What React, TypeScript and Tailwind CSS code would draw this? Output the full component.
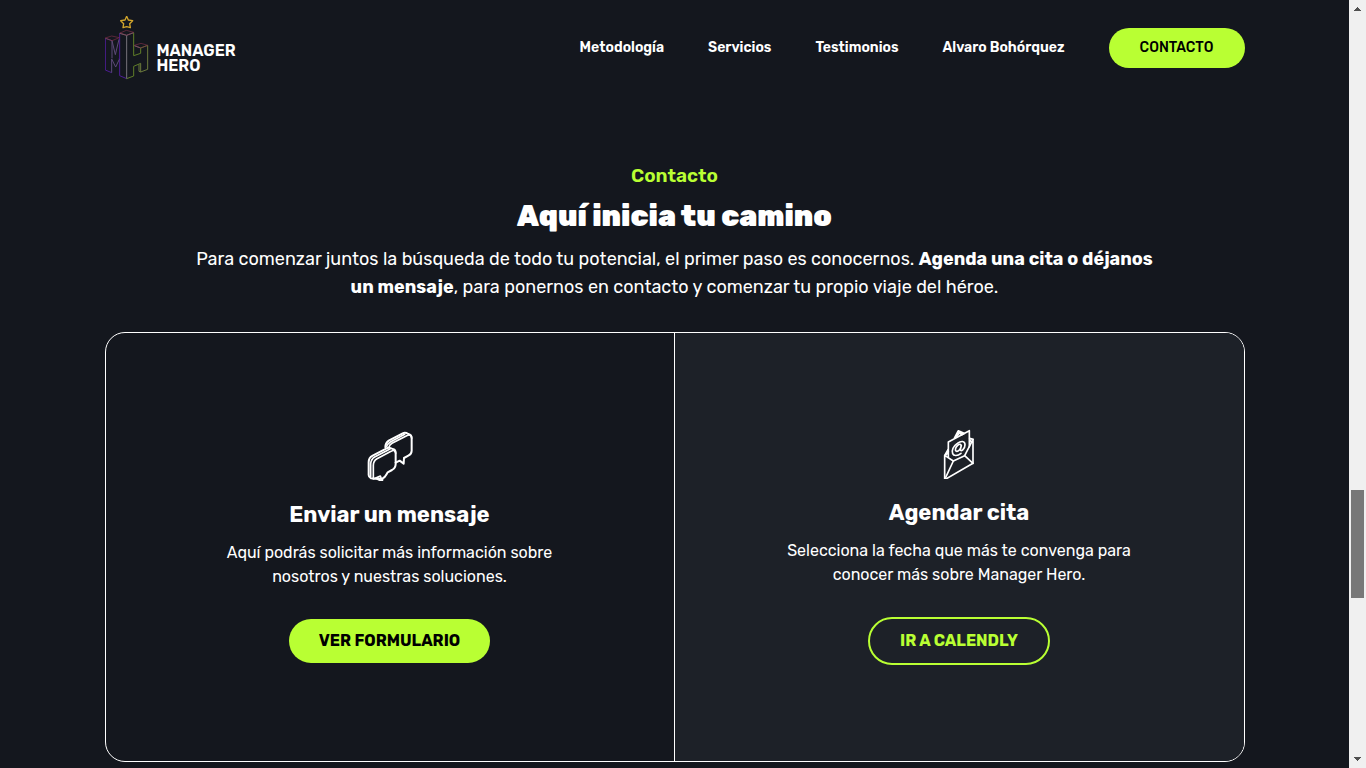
import { FC, ReactNode } from 'react';

type IconProps = {
  className?: string;
};

type ContactOptionProps = {
  icon: ReactNode;
  title: string;
  children: ReactNode;
  action: ReactNode;
  className?: string;
};

const NAV_LINKS = [
  { label: 'Metodología', href: '#metodologia' },
  { label: 'Servicios', href: '#servicios' },
  { label: 'Testimonios', href: '#testimonios' },
  { label: 'Alvaro Bohórquez', href: '#alvaro' },
];

const LogoMark: FC<IconProps> = ({ className }) => (
  <svg viewBox="30 33 132 195" fill="none" className={className} aria-hidden="true">
    <path
      d="M95 34L100 45L113 47L104 56L106 68L95 65L84 68L86 56L77 47L90 45Z"
      stroke="#d3a62c"
      strokeWidth="4"
      strokeLinejoin="round"
    />
    <g strokeWidth="3" strokeLinejoin="round">
      <path d="M31 100V195L50 203M74 85V212L95 221M74 165L72 161" stroke="#4c1d95" />
      <path d="M31 100L51 107L61 149L72 103M51 107V160M50 203V162L62 186L73 163" stroke="#5d4a78" />
      <path d="M95 91V221M74 85L95 91L116 83M118 122L137 129" stroke="#77737c" />
      <path d="M95 221L116 213V184L137 175M116 83V152L137 145V129L158 121" stroke="#5f7d28" />
      <path d="M137 175V201L158 193V121M132 178V199L137 201" stroke="#6b7a3c" />
    </g>
    <path
      d="M31 99L50 93L73 98L51 107ZM75 84L94 76L116 82L95 91ZM118 121L138 115L158 121L137 129Z"
      stroke="#7d2f48"
      strokeWidth="2"
      strokeLinejoin="round"
    />
  </svg>
);

const ChatBubblesIcon: FC<IconProps> = ({ className }) => (
  <svg
    viewBox="30 32 150 150"
    fill="none"
    stroke="currentColor"
    strokeWidth="6"
    strokeLinecap="round"
    strokeLinejoin="round"
    className={className}
    aria-hidden="true"
  >
    <path d="M91 81C91 73 94 66 101 61L143 39C149 36 155 38 160 41C168 43 170 47 170 53V91C170 98 166 103 160 106L147 113L146 130L134 121L122 127" />
    <path d="M95 79C96 73 100 69 106 65L149 42M102 80C103 75 106 72 111 69L158 45C166 42 170 46 170 54" strokeWidth="5" />
    <path d="M41 164V126C41 117 45 110 53 106L95 84C101 80 107 82 113 86C119 87 122 91 122 98V131C122 139 118 145 111 149L98 156C94 162 92 170 83 174L81 183L68 176L48 174C44 172 41 169 41 164Z" />
    <path d="M47 169V130C48 120 52 114 59 110L105 86M55 174V135C55 125 59 119 66 115L108 93C116 88 122 91 122 99" strokeWidth="5" />
    <path d="M55 176L76 167L81 180M69 174L78 177" strokeWidth="5" />
  </svg>
);

const EnvelopeIcon: FC<IconProps> = ({ className }) => (
  <svg
    viewBox="28 26 150 150"
    fill="none"
    stroke="currentColor"
    strokeWidth="5"
    strokeLinecap="round"
    strokeLinejoin="round"
    className={className}
    aria-hidden="true"
  >
    <path d="M60 105V178L145 129V57L120 106L86 122L60 105Z" />
    <path d="M60 178L86 122M145 129L120 106" />
    <path d="M71 111V65L134 31V79" />
    <path d="M61 104L70 88M66 103L71 94M135 54L145 57M136 60L140 65" />
    <path d="M90 53L101 32L118 39L111 43M95 49L104 37L111 42" strokeWidth="6" />
    <path d="M109 77C110 70 104 71 99 75C92 81 90 91 95 93C101 95 108 86 110 76L107 88C108 96 121 86 121 73C121 61 109 61 98 69C86 77 80 90 84 100C87 108 99 107 109 99" />
  </svg>
);

const ContactOption: FC<ContactOptionProps> = ({ icon, title, children, action, className }) => (
  <article className={`flex flex-col items-center justify-center text-center ${className ?? ''}`}>
    {icon}
    <h3 className="mt-5 text-[22px] leading-7 font-bold">{title}</h3>
    <p className="mt-3 mb-[30px] text-base leading-6">{children}</p>
    {action}
  </article>
);

const Header = () => (
  <header className="mx-auto flex h-24 w-full max-w-[1140px] items-center justify-between">
    <a href="#inicio" className="flex items-end gap-2">
      <LogoMark className="h-[65px] w-11" />
      <span className="pb-2 text-base leading-[15px] font-semibold">
        MANAGER
        <br />
        HERO
      </span>
    </a>
    <nav className="flex items-center gap-11 text-sm font-semibold">
      {NAV_LINKS.map(({ label, href }) => (
        <a key={href} href={href}>
          {label}
        </a>
      ))}
      <a
        href="#contacto"
        className="flex h-10 w-[136px] items-center justify-center rounded-full bg-[#b9ff33] font-medium text-black"
      >
        CONTACTO
      </a>
    </nav>
  </header>
);

const ContactSection = () => (
  <section id="contacto" className="mx-auto w-full max-w-[1140px] pt-[66px] pb-1 text-center">
    <p className="text-[19px] leading-7 font-semibold text-[#b9ff33]">Contacto</p>
    <h2 className="mt-2 text-[29px] leading-9 font-black">Aquí inicia tu camino</h2>
    <p className="mx-auto mt-[11px] max-w-[960px] text-lg leading-7">
      Para comenzar juntos la búsqueda de todo tu potencial, el primer paso es conocernos.{' '}
      <strong className="font-bold">Agenda una cita o déjanos un mensaje</strong>, para ponernos en contacto y
      comenzar tu propio viaje del héroe.
    </p>
    <div className="mt-[31px] grid min-h-[430px] grid-cols-2 overflow-hidden rounded-[20px] border border-white">
      <ContactOption
        className="border-r border-white"
        icon={<ChatBubblesIcon className="size-[50px]" />}
        title="Enviar un mensaje"
        action={
          <button
            type="button"
            className="h-11 w-[201px] rounded-full bg-[#b9ff33] text-base font-bold text-black"
          >
            VER FORMULARIO
          </button>
        }
      >
        Aquí podrás solicitar más información sobre
        <br />
        nosotros y nuestras soluciones.
      </ContactOption>
      <ContactOption
        className="bg-[#1d2128]"
        icon={<EnvelopeIcon className="size-[50px]" />}
        title="Agendar cita"
        action={
          <button
            type="button"
            className="h-12 w-[182px] rounded-full border-2 border-[#b9ff33] text-base font-bold text-[#b9ff33]"
          >
            IR A CALENDLY
          </button>
        }
      >
        Selecciona la fecha que más te convenga para
        <br />
        conocer más sobre Manager Hero.
      </ContactOption>
    </div>
  </section>
);

const ScrollRail = () => (
  <div className="sticky top-0 flex h-screen w-[17px] shrink-0 flex-col items-center bg-[#f0f0f0] py-[7px]" aria-hidden="true">
    <svg viewBox="0 0 7 4" className="h-1 w-[7px] fill-[#505050]">
      <path d="M3 0h1v1h1v1h1v1h1v1H0V3h1V2h1V1h1z" />
    </svg>
    <div className="grow-[479]" />
    <div className="h-[108px] w-[13px] bg-[#787878]" />
    <div className="grow-[159]" />
    <svg viewBox="0 0 7 4" className="h-1 w-[7px] fill-[#505050]">
      <path d="M0 0h7v1H6v1H5v1H4v1H3V3H2V2H1V1H0z" />
    </svg>
  </div>
);

const App = () => {
  return (
    <div className="flex min-h-screen bg-[#14171e] font-[Rubik,Inter,sans-serif] text-white">
      <main className="min-w-0 flex-1">
        <Header />
        <ContactSection />
      </main>
      <ScrollRail />
    </div>
  );
};

export default App;
